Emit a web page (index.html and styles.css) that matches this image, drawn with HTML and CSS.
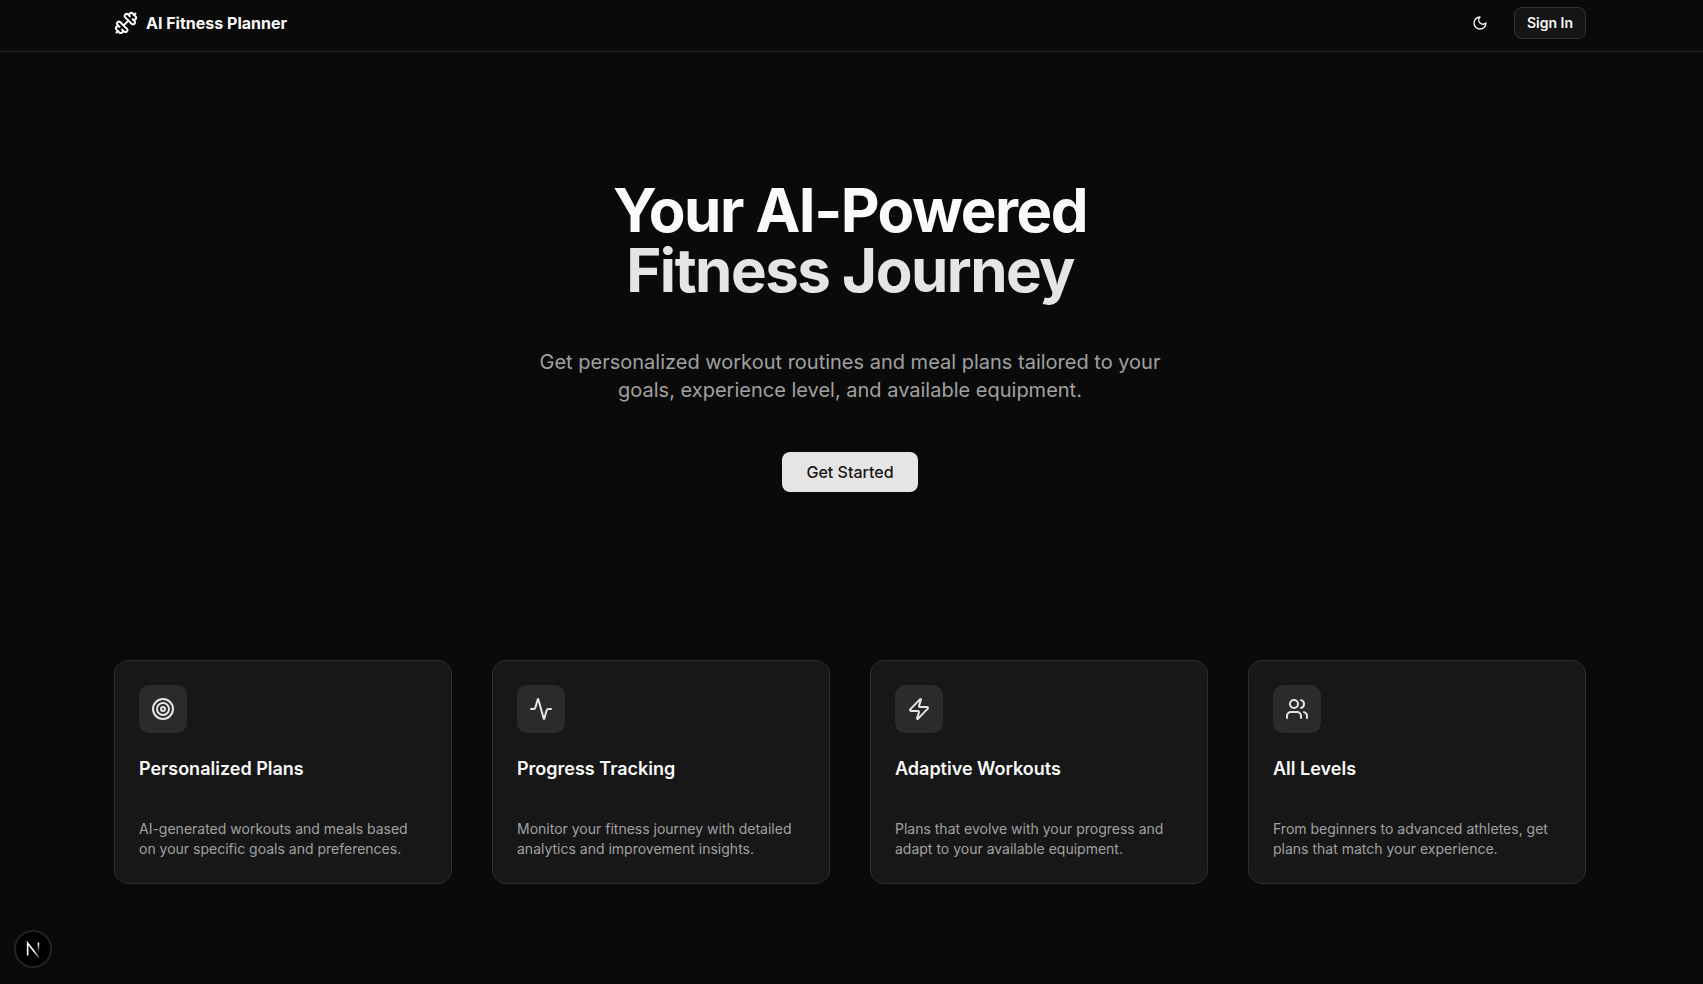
FILE: index.html
```html
<!DOCTYPE html>
<html lang="en">
<head>
<meta charset="utf-8">
<meta name="viewport" content="width=device-width, initial-scale=1">
<title>AI Fitness Planner</title>
<link rel="stylesheet" href="styles.css">
</head>
<body>
<header class="header">
  <div class="container header-bar">
    <a class="brand" href="#">
      <svg class="icon icon-lg" viewBox="0 0 24 24" aria-hidden="true"><path d="M17.596 12.768a2 2 0 1 0 2.829-2.829l-1.768-1.767a2 2 0 0 0 2.828-2.829l-2.828-2.828a2 2 0 0 0-2.829 2.828l-1.767-1.768a2 2 0 1 0-2.829 2.829z"/><path d="m2.500 21.500 1.400-1.400"/><path d="m20.100 3.900 1.400-1.400"/><path d="M5.343 21.485a2 2 0 1 0 2.829-2.828l1.767 1.768a2 2 0 1 0 2.829-2.829l-6.364-6.364a2 2 0 1 0-2.829 2.829l1.768 1.767a2 2 0 0 0-2.828 2.829z"/><path d="m9.600 14.400 4.800-4.800"/></svg>
      <span>AI Fitness Planner</span>
    </a>
    <nav class="actions">
      <button class="theme-toggle" type="button" aria-label="Toggle theme">
        <svg class="icon icon-sm" viewBox="0 0 24 24" aria-hidden="true"><path d="M12 3a6 6 0 0 0 9 9 9 9 0 1 1-9-9Z"/></svg>
      </button>
      <button class="sign-in" type="button">Sign In</button>
    </nav>
  </div>
</header>
<main class="container">
  <section class="hero">
    <h1 class="title">Your AI-Powered <span class="title-accent">Fitness Journey</span></h1>
    <p class="lead">Get personalized workout routines and meal plans tailored to your goals, experience level, and available equipment.</p>
    <a class="cta" href="#">Get Started</a>
  </section>
  <section class="features">
    <article class="card">
      <div class="badge"><svg class="icon icon-lg" viewBox="0 0 24 24" aria-hidden="true"><circle cx="12" cy="12" r="10"/><circle cx="12" cy="12" r="6"/><circle cx="12" cy="12" r="2"/></svg></div>
      <h2 class="card-title">Personalized Plans</h2>
      <p class="card-text">AI-generated workouts and meals based on your specific goals and preferences.</p>
    </article>
    <article class="card">
      <div class="badge"><svg class="icon icon-lg" viewBox="0 0 24 24" aria-hidden="true"><path d="M22 12h-2.480a2 2 0 0 0-1.930 1.460l-2.350 8.360a.25.25 0 0 1-.48 0L9.240 2.180a.25.25 0 0 0-.48 0l-2.350 8.360A2 2 0 0 1 4.490 12H2"/></svg></div>
      <h2 class="card-title">Progress Tracking</h2>
      <p class="card-text">Monitor your fitness journey with detailed analytics and improvement insights.</p>
    </article>
    <article class="card">
      <div class="badge"><svg class="icon icon-lg" viewBox="0 0 24 24" aria-hidden="true"><path d="M4 14a1 1 0 0 1-.78-1.630l9.900-10.200a.5.5 0 0 1 .86.46l-1.920 6.020A1 1 0 0 0 13 10h7a1 1 0 0 1 .78 1.630l-9.900 10.200a.5.5 0 0 1-.86-.46l1.920-6.020A1 1 0 0 0 11 14z"/></svg></div>
      <h2 class="card-title">Adaptive Workouts</h2>
      <p class="card-text">Plans that evolve with your progress and adapt to your available equipment.</p>
    </article>
    <article class="card">
      <div class="badge"><svg class="icon icon-lg" viewBox="0 0 24 24" aria-hidden="true"><path d="M16 21v-2a4 4 0 0 0-4-4H6a4 4 0 0 0-4 4v2"/><circle cx="9" cy="7" r="4"/><path d="M22 21v-2a4 4 0 0 0-3-3.870"/><path d="M16 3.130a4 4 0 0 1 0 7.750"/></svg></div>
      <h2 class="card-title">All Levels</h2>
      <p class="card-text">From beginners to advanced athletes, get plans that match your experience.</p>
    </article>
  </section>
</main>
<button class="dev-badge" type="button" aria-label="Open developer tools">
  <svg class="dev-mark" viewBox="0 0 40 40" fill="none" aria-hidden="true">
    <defs>
      <linearGradient id="diag" x1="22" y1="22" x2="30" y2="33" gradientUnits="userSpaceOnUse"><stop stop-color="#fff"/><stop offset="1" stop-color="#fff" stop-opacity="0"/></linearGradient>
      <linearGradient id="stem" x1="27" y1="13" x2="27" y2="24" gradientUnits="userSpaceOnUse"><stop stop-color="#fff"/><stop offset="1" stop-color="#fff" stop-opacity="0"/></linearGradient>
    </defs>
    <path d="M13.300 28V12.500L27.500 31" stroke="url(#diag)" stroke-width="2"/>
    <path d="M26.800 12v13" stroke="url(#stem)" stroke-width="2"/>
  </svg>
</button>
</body>
</html>
```
FILE: styles.css
```css
*, *::before, *::after { box-sizing: border-box; }

body {
  margin: 0;
  min-height: 100vh;
  padding-right: 3px;
  background: #0a0a0a;
  color: #fafafa;
  font-family: Inter, "Liberation Sans", sans-serif;
  font-size: 16px;
  line-height: 24px;
}

h1, h2, p { margin: 0; }
a { color: inherit; text-decoration: none; }
button { font: inherit; cursor: pointer; }

.container {
  width: 100%;
  max-width: 1536px;
  margin: 0 auto;
  padding: 0 32px;
}

.icon {
  flex: none;
  fill: none;
  stroke: currentColor;
  stroke-width: 2;
  stroke-linecap: round;
  stroke-linejoin: round;
}
.icon-lg { width: 24px; height: 24px; }
.icon-sm { width: 16px; height: 16px; }

.header {
  margin-right: -3px;
  padding: 7px 3px 12px 0;
  border-bottom: 1px solid #262626;
}
.header-bar,
.brand,
.actions {
  display: flex;
  align-items: center;
}
.header-bar { justify-content: space-between; }
.brand { gap: 8px; font-weight: 700; }
.actions { gap: 16px; }
.theme-toggle {
  display: grid;
  place-items: center;
  width: 36px;
  height: 32px;
  padding: 0;
  border: 0;
  background: none;
  color: inherit;
}
.sign-in {
  height: 32px;
  padding: 0 12px;
  border: 1px solid #343434;
  border-radius: 8px;
  background: #151515;
  color: inherit;
  font-size: 14px;
  font-weight: 600;
  line-height: 20px;
}

.hero {
  display: flex;
  flex-direction: column;
  align-items: center;
  padding: 128px 0;
  text-align: center;
}
.title {
  font-size: 60px;
  font-weight: 700;
  line-height: 60px;
  letter-spacing: -1.5px;
}
.title-accent { display: block; color: #e5e5e5; }
.lead {
  max-width: 672px;
  margin-top: 48px;
  color: #a1a1a1;
  font-size: 20px;
  line-height: 28px;
}
.cta {
  margin-top: 48px;
  padding: 8px 24px;
  border-radius: 8px;
  background: #e5e5e5;
  color: #171717;
  font-weight: 500;
}

.features {
  display: grid;
  grid-template-columns: repeat(4, minmax(0, 1fr));
  gap: 40px;
  padding: 40px 0;
}
.card {
  padding: 24px;
  border: 1px solid #2e2e2e;
  border-radius: 14px;
  background: #171717;
}
.badge {
  display: grid;
  place-items: center;
  width: 48px;
  height: 48px;
  border-radius: 10px;
  background: #2b2b2b;
  color: #e5e5e5;
}
.card-title {
  margin-top: 22px;
  font-size: 18px;
  font-weight: 600;
  line-height: 28px;
}
.card-text {
  margin-top: 36px;
  color: #a1a1a1;
  font-size: 14px;
  line-height: 20px;
}

.dev-badge {
  position: fixed;
  left: 14px;
  bottom: 16px;
  display: grid;
  place-items: center;
  width: 38px;
  height: 38px;
  padding: 0;
  border: 2px solid #232323;
  border-radius: 50%;
  background: #000;
}
.dev-mark { width: 32px; height: 32px; }

@media (max-width: 1100px) {
  .features { grid-template-columns: repeat(2, minmax(0, 1fr)); }
}
```
